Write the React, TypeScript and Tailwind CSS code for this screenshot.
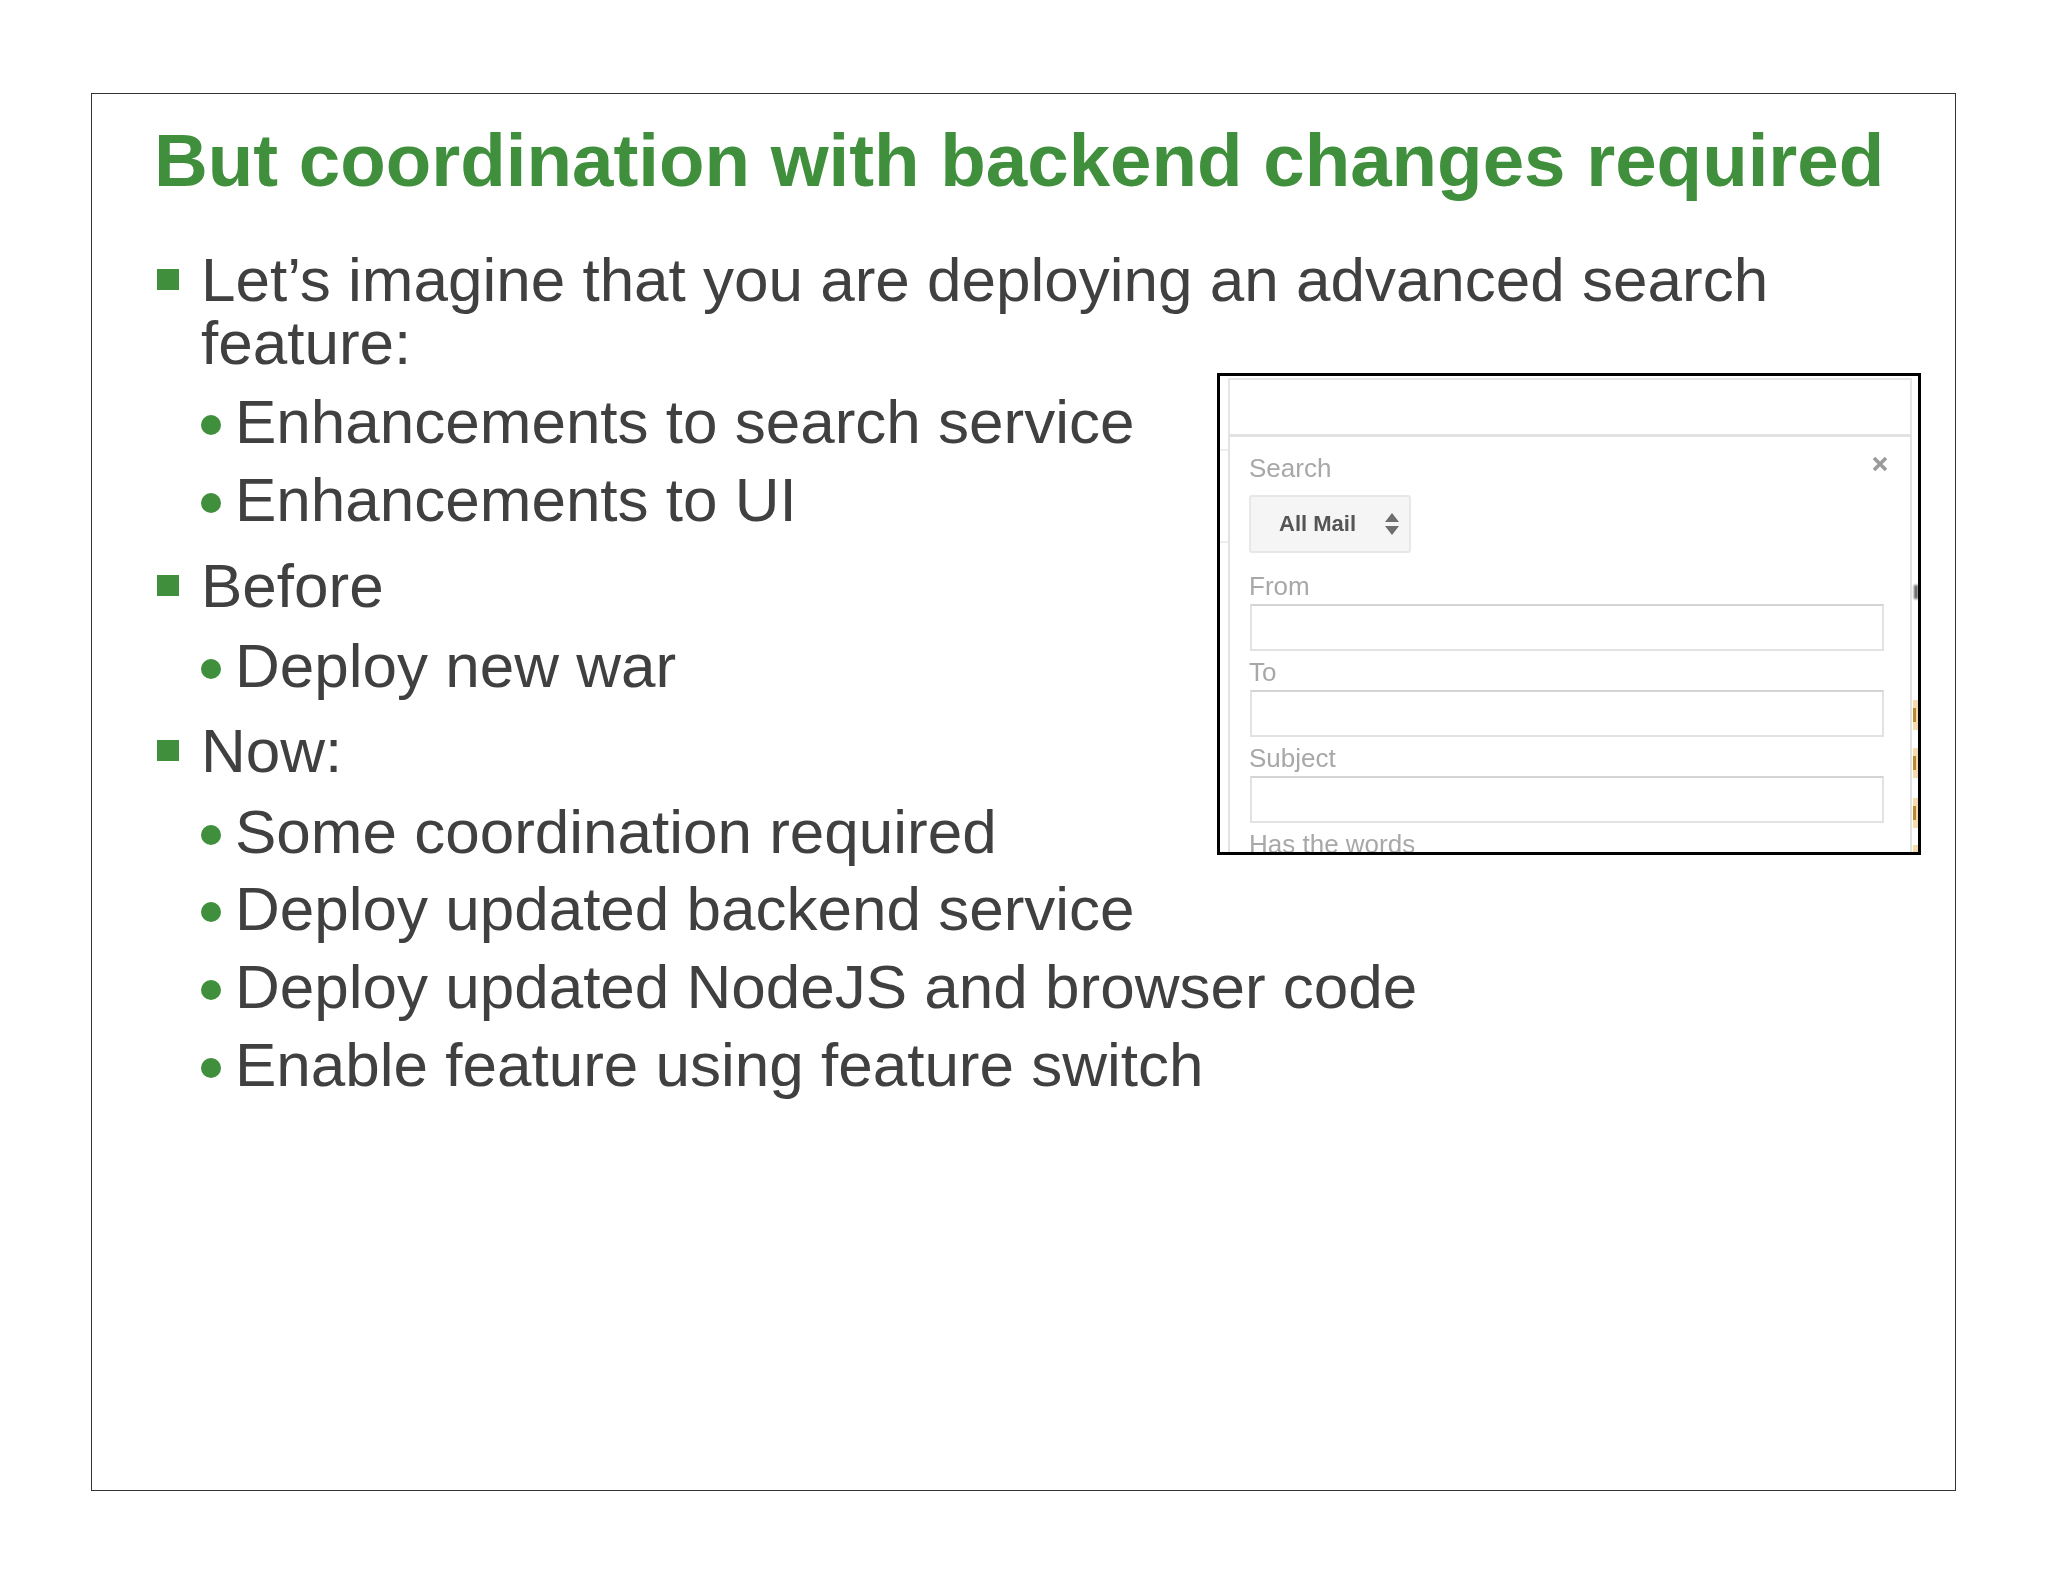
const font = { fontFamily: '"Liberation Sans", Arial, sans-serif' }

function Top({ children, className = '' }: { children: React.ReactNode; className?: string }) {
  return (
    <div className={`flex items-start text-[62px] leading-[63px] text-[#404040] ${className}`}>
      <span className="mt-[21px] mr-[22px] ml-[2px] h-[21px] w-[22px] shrink-0 bg-[#3f8f3c]" />
      <span>{children}</span>
    </div>
  )
}

function Sub({ children, className = '' }: { children: React.ReactNode; className?: string }) {
  return (
    <div className={`ml-[46px] flex items-start text-[62px] leading-[62px] text-[#404040] ${className}`}>
      <span className="mt-[24px] mr-[14px] h-[20px] w-[20px] shrink-0 rounded-full bg-[#3f8f3c]" />
      <span>{children}</span>
    </div>
  )
}

function Field({ label }: { label: string }) {
  return (
    <div>
      <div className="flex h-[39px] items-end pb-[3px] text-[26px] leading-[30px] text-[#a8a8a8]">{label}</div>
      <div className="ml-[1px] h-[47px] w-[634px] border-2 border-[#e2e2e2] border-t-[#d4d4d4]" />
    </div>
  )
}

function Shot() {
  return (
    <div className="absolute left-[1125px] top-[279px] h-[482px] w-[704px] overflow-hidden border-[3px] border-black bg-white">
      <div className="blur-[0.6px]">
        <div className="mt-[2px] ml-[8px] h-[56px] w-[684px] border-2 border-b-0 border-[#e6e6e6]" />
        <div className="ml-[8px] h-[440px] w-[684px] border-x-2 border-t-[3px] border-[#e2e2e2] px-[19px] pt-[14px]">
          <div className="flex justify-between">
            <span className="text-[26px] leading-[34px] text-[#a8a8a8]">Search</span>
            <svg width="16" height="16" viewBox="0 0 16 16" className="mt-[5px] mr-[3px]">
              <path d="M2 2 14 14M14 2 2 14" stroke="#9a9a9a" strokeWidth="3.5" />
            </svg>
          </div>
          <div className="mt-[10px] flex h-[58px] w-[162px] items-center rounded-[3px] border-2 border-[#e8e8e8] bg-[#f5f5f5] pl-[28px]">
            <span className="text-[22px] font-bold leading-none text-[#555555]">All Mail</span>
            <svg width="16" height="24" viewBox="0 0 16 24" className="ml-[28px]">
              <path d="M8 1 15 10H1ZM1 14H15L8 23Z" fill="#6e6e6e" />
            </svg>
          </div>
          <div className="mt-[12px]">
            <Field label="From" />
            <Field label="To" />
            <Field label="Subject" />
            <div className="flex h-[39px] items-end pb-[3px] text-[26px] leading-[30px] text-[#a8a8a8]">Has the words</div>
          </div>
        </div>
      </div>
      {/* bits of the mail list showing past the dialog */}
      <div className="absolute left-[694px] top-[209px] h-[14px] w-[4px] bg-[#666666] blur-[1px]" />
      <div className="absolute left-[693px] top-[324px] flex h-[30px] w-[5px] items-center bg-[#f5dcae] blur-[0.5px]">
        <span className="h-[14px] w-[3px] bg-[#b98a2e]" />
      </div>
      <div className="absolute left-[693px] top-[372px] flex h-[30px] w-[5px] items-center bg-[#f5dcae] blur-[0.5px]">
        <span className="h-[14px] w-[3px] bg-[#b98a2e]" />
      </div>
      <div className="absolute left-[693px] top-[422px] flex h-[30px] w-[5px] items-center bg-[#f5dcae] blur-[0.5px]">
        <span className="h-[14px] w-[3px] bg-[#b98a2e]" />
      </div>
      <div className="absolute left-[693px] top-[469px] h-[10px] w-[5px] bg-[#f5dcae] blur-[0.5px]" />
      <div className="absolute left-[0px] top-[73px] h-[2px] w-[8px] bg-[#eeeeee]" />
      <div className="absolute left-[0px] top-[165px] h-[2px] w-[8px] bg-[#eeeeee]" />
    </div>
  )
}

export default function App() {
  return (
    <div className="h-[1582px] w-[2048px] bg-white pt-[93px] pl-[91px]" style={font}>
      <div className="relative h-[1398px] w-[1865px] border border-[#333333] pt-[27px] pl-[63px]">
        <h1 className="-ml-[1px] text-[74.5px] font-bold leading-[80px] text-[#3f8f3c]">But coordination with backend changes required</h1>
        <div className="mt-[47px]">
          <Top>Let’s imagine that you are deploying an advanced search<br />feature:</Top>
          <Sub className="mt-[17px]">Enhancements to search service</Sub>
          <Sub className="mt-[16px]">Enhancements to UI</Sub>
          <Top className="mt-[23px]">Before</Top>
          <Sub className="mt-[18px]">Deploy new war</Sub>
          <Top className="mt-[22px]">Now:</Top>
          <Sub className="mt-[19px]">Some coordination required</Sub>
          <Sub className="mt-[15px]">Deploy updated backend service</Sub>
          <Sub className="mt-[16px]">Deploy updated NodeJS and browser code</Sub>
          <Sub className="mt-[16px]">Enable feature using feature switch</Sub>
        </div>
        <Shot />
      </div>
    </div>
  )
}
